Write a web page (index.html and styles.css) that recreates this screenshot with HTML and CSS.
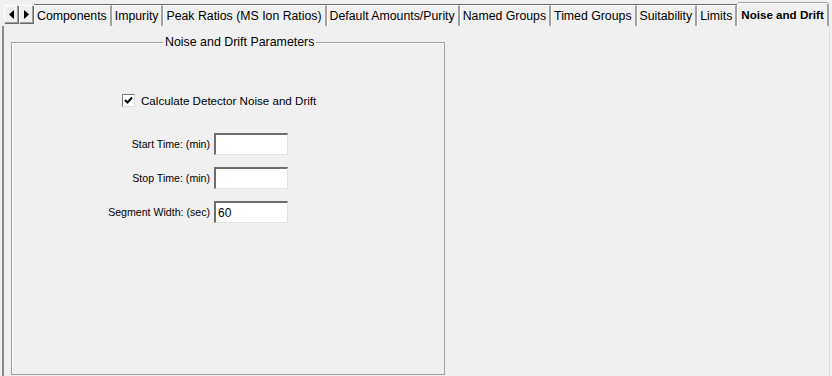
FILE: index.html
```html
<!DOCTYPE html>
<html>
<head>
    <meta charset="utf-8">
    <link rel="stylesheet" href="styles.css">
</head>
<body>
    <div class="tab-strip">
        <div class="scroll-buttons">
            <span class="scroll-btn"><svg width="7" height="9" viewBox="0 0 7 9"><path d="M6 0 L1 4.5 L6 9 Z" fill="#000"/></svg></span>
            <span class="scroll-btn"><svg width="7" height="9" viewBox="0 0 7 9"><path d="M1 0 L6 4.5 L1 9 Z" fill="#000"/></svg></span>
        </div>
        <div class="tab">Components</div>
        <div class="tab">Impurity</div>
        <div class="tab">Peak Ratios (MS Ion Ratios)</div>
        <div class="tab">Default Amounts/Purity</div>
        <div class="tab">Named Groups</div>
        <div class="tab">Timed Groups</div>
        <div class="tab">Suitability</div>
        <div class="tab">Limits</div>
        <div class="tab active">Noise and Drift</div>
    </div>

    <div class="page">
        <fieldset class="group-box">
            <legend>Noise and Drift Parameters</legend>

            <label class="check-row">
                <span class="checkbox"><svg width="9" height="9" viewBox="0 0 9 9"><path d="M1 4 L3.5 6.5 L8 1.5" stroke="#000" stroke-width="2" fill="none"/></svg></span>
                Calculate Detector Noise and Drift
            </label>

            <div class="field-grid">
                <span class="field-label">Start Time: (min)</span>
                <input class="field" type="text" value="">
                <span class="field-label">Stop Time: (min)</span>
                <input class="field" type="text" value="">
                <span class="field-label">Segment Width: (sec)</span>
                <input class="field" type="text" value="60">
            </div>
        </fieldset>
    </div>
</body>
</html>
```

FILE: styles.css
```css
body {
    font-family: "Liberation Sans", Arial, sans-serif;
    font-size: 12px;
    color: #000;
    background-color: #f0f0f0;
    margin: 0;
    padding: 0;
    height: 376px;
    overflow: hidden;
}

.tab-strip {
    display: flex;
    align-items: flex-end;
    height: 26px;
    padding-left: 4px;
    box-sizing: border-box;
    border-top: 2px solid #f0f0f0;
    font-size: 12.3px;
}

.scroll-buttons {
    display: flex;
    align-self: flex-start;
    margin-top: 3px;
}

.scroll-btn {
    display: flex;
    align-items: center;
    justify-content: center;
    width: 12px;
    height: 16px;
    background-color: #f0f0f0;
    border: 1px solid #a0a0a0;
    border-top-color: #fff;
    border-left-color: #fff;
    box-shadow: 1px 1px 0 #696969;
    margin-right: 1px;
}

.tab {
    height: 21px;
    line-height: 20px;
    padding: 0 3px 0 2px;
    border-top: 1px solid #fff;
    border-left: 1px solid #fff;
    border-right: 2px solid #a0a0a0;
    box-sizing: border-box;
    white-space: nowrap;
    box-shadow: 0 -1px 0 #696969;
}

.tab.active {
    height: 23px;
    line-height: 21px;
    font-weight: bold;
    font-size: 11.6px;
    padding: 0 3px 0 3px;
    border-radius: 3px 3px 0 0;
    border-right: 2px solid #a0a0a0;
    box-shadow: 0 -1px 0 #a0a0a0;
}

.page {
    height: 350px;
    margin-left: 2px;
    margin-right: 2px;
    border-left: 2px solid #8a8a8a;
    border-right: 1px solid #dcdcdc;
    padding: 9px 0 0 7px;
    box-sizing: border-box;
}

.group-box {
    width: 434px;
    height: 340px;
    margin: 0;
    padding: 0;
    box-sizing: border-box;
    border: 1px solid #a0a0a0;
    box-shadow: inset 1px 1px 0 #fff;
}

.group-box legend {
    margin-left: 151px;
    padding: 0 2px;
    font-size: 12.4px;
}

.check-row {
    display: flex;
    align-items: center;
    margin: 45px 0 0 110px;
    gap: 6px;
    font-size: 11.6px;
}

.checkbox {
    display: flex;
    align-items: center;
    justify-content: center;
    width: 11px;
    height: 11px;
    background-color: #fff;
    border: 1px solid #7a7a7a;
    border-right-color: #dcdcdc;
    border-bottom-color: #dcdcdc;
}

.field-grid {
    display: grid;
    grid-template-columns: 121px 74px;
    column-gap: 4px;
    row-gap: 12px;
    align-items: center;
    margin: 26px 0 0 77px;
    font-size: 10.6px;
}

.field-label {
    text-align: right;
}

.field {
    width: 74px;
    height: 22px;
    box-sizing: border-box;
    margin: 0;
    padding: 0 2px;
    font-family: "Liberation Sans", Arial, sans-serif;
    font-size: 12px;
    background-color: #fff;
    border: 1px solid #828790;
    border-top: 2px solid #6d6d6d;
    border-left: 2px solid #6d6d6d;
    border-right-color: #e3e3e3;
    border-bottom-color: #e3e3e3;
    outline: none;
}
```
